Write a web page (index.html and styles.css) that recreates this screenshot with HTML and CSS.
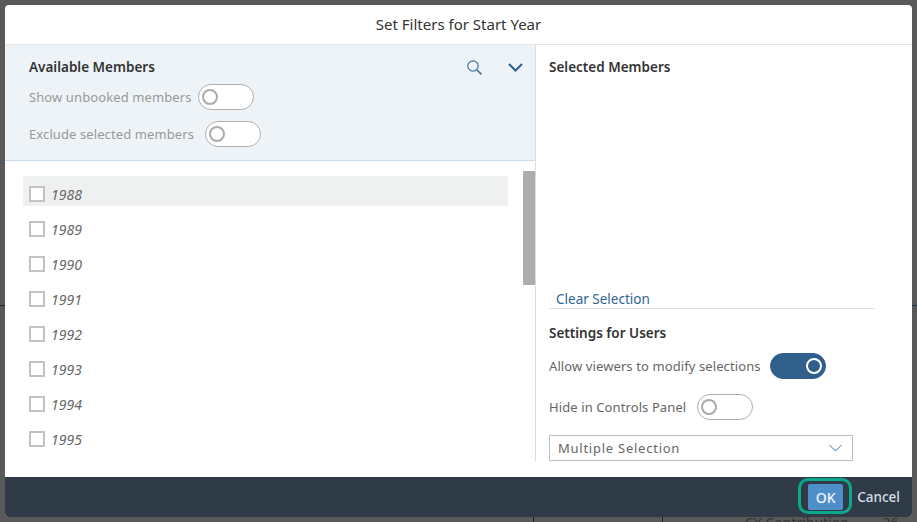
FILE: index.html
```html
<!DOCTYPE html>
<html lang="en">

<head>
    <meta charset="UTF-8">
    <meta name="viewport" content="width=device-width, initial-scale=1.0">
    <title>Set Filters for Start Year</title>
    <link rel="stylesheet" href="styles.css">
</head>

<body>
    <!-- things behind the dialog -->
    <div class="backdrop-line line-left"></div>
    <div class="backdrop-line line-right"></div>
    <div class="backdrop-tick tick-a"></div>
    <div class="backdrop-tick tick-b"></div>
    <div class="backdrop-text text-a">CY Contribution</div>
    <div class="backdrop-text text-b">-26</div>

    <div class="dialog">
        <div class="dialog-title">Set Filters for Start Year</div>

        <div class="dialog-body">
            <div class="pane-left">
                <div class="avail-head">
                    <div class="avail-title-row">
                        <span class="section-title">Available Members</span>
                        <svg class="icon-search" width="15" height="15" viewBox="0 0 15 15">
                            <circle cx="6" cy="6" r="5.2" fill="none" stroke="#3f6f9e" stroke-width="1.2"></circle>
                            <path d="M9.8 9.8 L14.4 14.4" stroke="#3f6f9e" stroke-width="1.6" fill="none"></path>
                        </svg>
                        <svg class="icon-chevron" width="15" height="9" viewBox="0 0 15 9">
                            <path d="M1 1 L7.5 7.5 L14 1" stroke="#2f5f8f" stroke-width="2" fill="none"></path>
                        </svg>
                    </div>
                    <div class="toggle-row toggle-row-first">
                        <span class="muted-label">Show unbooked members</span>
                        <span class="switch"><span class="knob"></span></span>
                    </div>
                    <div class="toggle-row">
                        <span class="muted-label label-wide">Exclude selected members</span>
                        <span class="switch"><span class="knob"></span></span>
                    </div>
                </div>

                <div class="member-area">
                    <div class="member-list">
                        <div class="member member-hover"><span class="check"></span><span>1988</span></div>
                        <div class="member"><span class="check"></span><span>1989</span></div>
                        <div class="member"><span class="check"></span><span>1990</span></div>
                        <div class="member"><span class="check"></span><span>1991</span></div>
                        <div class="member"><span class="check"></span><span>1992</span></div>
                        <div class="member"><span class="check"></span><span>1993</span></div>
                        <div class="member"><span class="check"></span><span>1994</span></div>
                        <div class="member"><span class="check"></span><span>1995</span></div>
                    </div>
                    <div class="scroll-track"><div class="scroll-thumb"></div></div>
                </div>
            </div>

            <div class="pane-right">
                <div class="section-title">Selected Members</div>
                <div class="selected-box"></div>
                <div class="clear-row"><a class="clear-link">Clear Selection</a></div>
                <div class="section-title settings-title">Settings for Users</div>
                <div class="setting-row setting-first">
                    <span class="setting-label">Allow viewers to modify selections</span>
                    <span class="switch switch-on"><span class="knob"></span></span>
                </div>
                <div class="setting-row">
                    <span class="setting-label label-wide">Hide in Controls Panel</span>
                    <span class="switch"><span class="knob"></span></span>
                </div>
                <div class="select-box">
                    <span>Multiple Selection</span>
                    <svg width="13" height="8" viewBox="0 0 13 8">
                        <path d="M0.5 1 L6.5 7 L12.5 1" stroke="#3f6f9e" stroke-width="1" fill="none"></path>
                    </svg>
                </div>
            </div>
        </div>

        <div class="dialog-footer">
            <button class="btn-ok">OK</button>
            <button class="btn-cancel">Cancel</button>
        </div>
    </div>
</body>

</html>
```

FILE: styles.css
```css
html,
body {
    height: 100%;
}

body {
    margin: 0;
    padding: 5px;
    box-sizing: border-box;
    background: #595959;
    font-family: "Noto Sans", "Open Sans", sans-serif;
    overflow: hidden;
    position: relative;
}

.backdrop-line {
    position: absolute;
    top: 305px;
    height: 1px;
    background: #222;
}

.line-left {
    left: 0;
    width: 5px;
}

.line-right {
    left: 912px;
    width: 5px;
    background: #1d3445;
}

.backdrop-tick {
    position: absolute;
    top: 517px;
    width: 1px;
    height: 5px;
    background: #222;
}

.tick-a {
    left: 533px;
}

.tick-b {
    left: 662px;
}

.backdrop-text {
    position: absolute;
    top: 515px;
    font-size: 14px;
    line-height: 16px;
    color: #333;
    white-space: nowrap;
}

.text-a {
    left: 745px;
}

.text-b {
    left: 878px;
}

.dialog {
    height: 512px;
    background: #fff;
    border-radius: 4px;
    display: flex;
    flex-direction: column;
    overflow: hidden;
    position: relative;
}

.dialog-title {
    height: 39px;
    line-height: 39px;
    flex: none;
    text-align: center;
    font-size: 15px;
    color: #333;
    border-bottom: 1px solid #e6e6e6;
}

.dialog-body {
    flex: 1;
    display: flex;
    min-height: 0;
}

.pane-left {
    width: 530px;
    flex: none;
    border-right: 1px solid #dcdcdc;
    margin-bottom: 16px;
    display: flex;
    flex-direction: column;
}

.avail-head {
    height: 116px;
    flex: none;
    box-sizing: border-box;
    padding: 13px 12px 0 24px;
    background: #eef3f7;
    border-bottom: 1px solid #c8dcee;
}

.avail-title-row {
    display: flex;
    align-items: center;
    height: 18px;
}

.avail-title-row .section-title {
    flex: 1;
}

.icon-search {
    margin-right: 26px;
}

.section-title {
    font-size: 13.5px;
    font-weight: 600;
    color: #333;
    line-height: 18px;
}

.toggle-row {
    display: flex;
    align-items: center;
    height: 26px;
    margin-top: 11px;
}

.toggle-row-first {
    margin-top: 8px;
}

.muted-label {
    font-size: 13px;
    letter-spacing: 0.1px;
    color: #999;
    margin-right: 7px;
}

.muted-label.label-wide {
    margin-right: 11px;
}

.switch {
    display: inline-flex;
    align-items: center;
    box-sizing: border-box;
    width: 56px;
    height: 26px;
    padding-left: 3px;
    background: #fff;
    border: 1px solid #b0b0b0;
    border-radius: 13px;
}

.knob {
    width: 16px;
    height: 16px;
    box-sizing: border-box;
    border: 2px solid #ababab;
    border-radius: 50%;
    background: #fff;
}

.switch-on {
    justify-content: flex-end;
    padding: 0 3px 0 0;
    background: #2f5f8a;
    border-color: #2f5f8a;
}

.switch-on .knob {
    background: #2f5f8a;
    border-color: #fff;
}

.member-area {
    flex: 1;
    display: flex;
    min-height: 0;
    padding-top: 10px;
}

.member-list {
    flex: 1;
    padding: 5px 15px 0 18px;
}

.member {
    height: 30px;
    box-sizing: border-box;
    margin-bottom: 5px;
    padding: 6px 0 0 6px;
    display: flex;
    align-items: center;
    font-size: 14px;
    font-style: italic;
    color: #666;
}

.member-hover {
    background: #eff1f0;
}

.check {
    width: 16px;
    height: 16px;
    box-sizing: border-box;
    border: 2px solid #c2c2c2;
    background: #fff;
    margin-right: 6px;
}

.scroll-track {
    width: 12px;
    flex: none;
}

.scroll-thumb {
    height: 114px;
    background: #adadad;
}

.pane-right {
    flex: 1;
    padding: 13px 0 0 13px;
    display: flex;
    flex-direction: column;
}

.selected-box {
    height: 209px;
    flex: none;
}

.clear-row {
    width: 326px;
    height: 24px;
    flex: none;
    box-sizing: border-box;
    padding-left: 7px;
    border-bottom: 1px solid #e0e0e0;
    line-height: 26px;
}

.clear-link {
    font-size: 13.5px;
    color: #2f6595;
}

.settings-title {
    margin-top: 15px;
}

.setting-row {
    display: flex;
    align-items: center;
    height: 26px;
    margin-top: 15px;
}

.setting-first {
    margin-top: 11px;
}

.setting-label {
    font-size: 13px;
    letter-spacing: 0.1px;
    color: #666;
    margin-right: 9px;
}

.setting-label.label-wide {
    margin-right: 11px;
}

.select-box {
    width: 304px;
    height: 26px;
    margin-top: 15px;
    box-sizing: border-box;
    padding: 0 10px 0 8px;
    border: 1px solid #bdbdbd;
    display: flex;
    align-items: center;
    justify-content: space-between;
    font-size: 13px;
    letter-spacing: 0.75px;
    color: #666;
}

.dialog-footer {
    height: 40px;
    flex: none;
    background: #2f3b47;
    display: flex;
    align-items: center;
    justify-content: flex-end;
    padding-right: 12px;
}

.btn-ok {
    width: 35px;
    height: 26px;
    padding: 0;
    border: 0;
    border-radius: 2px;
    background: #4f8fc9;
    color: #f0f5fa;
    font: 500 14px "Noto Sans", sans-serif;
    margin-right: 14px;
    position: relative;
}

/* focus ring */
.btn-ok::after {
    content: "";
    position: absolute;
    top: -6px;
    bottom: -4px;
    left: -10px;
    right: -9px;
    border: 3px solid #0aa88c;
    border-radius: 10px;
}

.btn-cancel {
    padding: 0;
    border: 0;
    background: none;
    color: #d5dfe8;
    font: 500 13.5px "Noto Sans", sans-serif;
}
```
